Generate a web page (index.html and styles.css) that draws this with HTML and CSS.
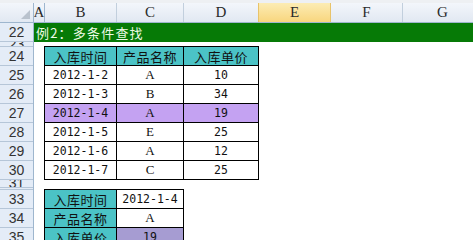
FILE: index.html
```html
<!DOCTYPE html>
<html>
<head>
<meta charset="utf-8">
<link rel="stylesheet" href="styles.css">
</head>
<body>
<div class="sheet">
  <div class="colheads">
    <div class="corner"><svg class="tri" width="9" height="9" viewBox="0 0 9 9"><polygon points="9,0 9,9 0,9" fill="#b9c2cd"/></svg></div>
    <div class="ch w-a">A</div>
    <div class="ch w-b">B</div>
    <div class="ch w-c">C</div>
    <div class="ch w-d">D</div>
    <div class="ch w-e sel">E</div>
    <div class="ch w-f">F</div>
    <div class="ch w-g">G</div>
  </div>
  <div class="body">
    <div class="rowheads">
      <div class="rh h19">22</div>
      <div class="rh h5">23</div>
      <div class="rh h19">24</div>
      <div class="rh h19">25</div>
      <div class="rh h19">26</div>
      <div class="rh h19">27</div>
      <div class="rh h19">28</div>
      <div class="rh h19">29</div>
      <div class="rh h19">30</div>
      <div class="rh h8">31</div>
      <div class="rh h2"></div>
      <div class="rh h19">33</div>
      <div class="rh h19">34</div>
      <div class="rh h19">35</div>
    </div>
    <div class="cells">
      <div class="title">例2：多条件查找</div>
      <div class="tbl t1">
        <div class="c hd">入库时间</div><div class="c hd">产品名称</div><div class="c hd">入库单价</div>
        <div class="c num">2012-1-2</div><div class="c ltr">A</div><div class="c num">10</div>
        <div class="c num">2012-1-3</div><div class="c ltr">B</div><div class="c num">34</div>
        <div class="c num hl">2012-1-4</div><div class="c ltr hl">A</div><div class="c num hl">19</div>
        <div class="c num">2012-1-5</div><div class="c ltr">E</div><div class="c num">25</div>
        <div class="c num">2012-1-6</div><div class="c ltr">A</div><div class="c num">12</div>
        <div class="c num">2012-1-7</div><div class="c ltr">C</div><div class="c num">25</div>
      </div>
      <div class="tbl t2">
        <div class="c hd">入库时间</div><div class="c num">2012-1-4</div>
        <div class="c hd">产品名称</div><div class="c ltr">A</div>
        <div class="c hd">入库单价</div><div class="c num res">19</div>
      </div>
    </div>
  </div>
</div>
</body>
</html>
```

FILE: styles.css
```css
html, body {
  margin: 0;
  padding: 0;
  background: #ffffff;
}
.sheet {
  width: 473px;
  height: 240px;
  overflow: hidden;
  background: #ffffff;
  font-family: "Liberation Sans", Arial, sans-serif;
}
.colheads {
  display: flex;
  height: 23px;
  box-sizing: border-box;
  border-top: 3px solid #eef0f3;
  background: linear-gradient(#f3f6fb, #e1e8f2);
  border-bottom: 1px solid #9eb6ce;
}
.corner {
  width: 34px;
  flex: none;
  box-sizing: border-box;
  border-right: 1px solid #9eb6ce;
  position: relative;
}
.tri {
  position: absolute;
  right: 3px;
  bottom: 3px;
}
.ch {
  flex: none;
  box-sizing: border-box;
  border-right: 1px solid #c2cfdd;
  display: flex;
  align-items: center;
  justify-content: center;
  font-family: "Liberation Serif", "Times New Roman", serif;
  font-size: 15px;
  color: #2a2a2a;
}
.w-a { width: 11px; border-right-color: #9eb6ce; }
.w-b { width: 72px; }
.w-c { width: 67px; }
.w-d { width: 75px; }
.w-e { width: 72px; }
.w-f { width: 72px; }
.w-g { width: 80px; }
.sel {
  background: linear-gradient(#fcecb4, #f8d67e);
  border-right-color: #e8c36a;
  border-left: 1px solid #e8c36a;
  margin-left: -1px;
  width: 73px;
}
.body {
  display: flex;
}
.rowheads {
  width: 34px;
  flex: none;
  display: flex;
  flex-direction: column;
  background: #e4ecf7;
  border-right: 1px solid #9eb6ce;
  box-sizing: border-box;
}
.rh {
  box-sizing: border-box;
  border-bottom: 1px solid #b6c6d8;
  overflow: hidden;
  display: flex;
  align-items: center;
  justify-content: center;
  font-size: 14px;
  color: #333333;
  line-height: 16px;
}
.h19 { height: 19px; }
.h5 { height: 5px; line-height: 4px; }
.h8 { height: 8px; line-height: 7px; }
.h2 { height: 2px; }
.cells {
  flex: 1;
  display: flex;
  flex-direction: column;
  align-items: flex-start;
}
.title {
  align-self: stretch;
  height: 19px;
  background: #067a06;
  color: #eefbe6;
  font-family: "Noto Sans CJK SC", sans-serif;
  font-size: 13px;
  line-height: 19px;
  padding-left: 2px;
  letter-spacing: 1.2px;
}
.tbl {
  display: grid;
  gap: 1px;
  padding: 1px;
  background: #000000;
  grid-auto-rows: 18px;
}
.t1 {
  grid-template-columns: 71px 66px 74px;
  margin: 4px 0 0 10px;
}
.t2 {
  grid-template-columns: 71px 66px;
  margin: 9px 0 0 10px;
}
.c {
  background: #ffffff;
  display: flex;
  align-items: center;
  justify-content: center;
  color: #111111;
  overflow: hidden;
  white-space: nowrap;
}
.hd {
  background: #4bc3c6;
  font-family: "Noto Sans CJK SC", sans-serif;
  font-size: 13px;
  letter-spacing: 0.5px;
}
.num {
  font-family: "DejaVu Sans Mono", "Liberation Mono", monospace;
  font-size: 11.5px;
}
.ltr {
  font-family: "Liberation Serif", "Times New Roman", serif;
  font-size: 13px;
}
.hl {
  background: #c4a2f2;
}
.res {
  background: #a69cd2;
}
```
